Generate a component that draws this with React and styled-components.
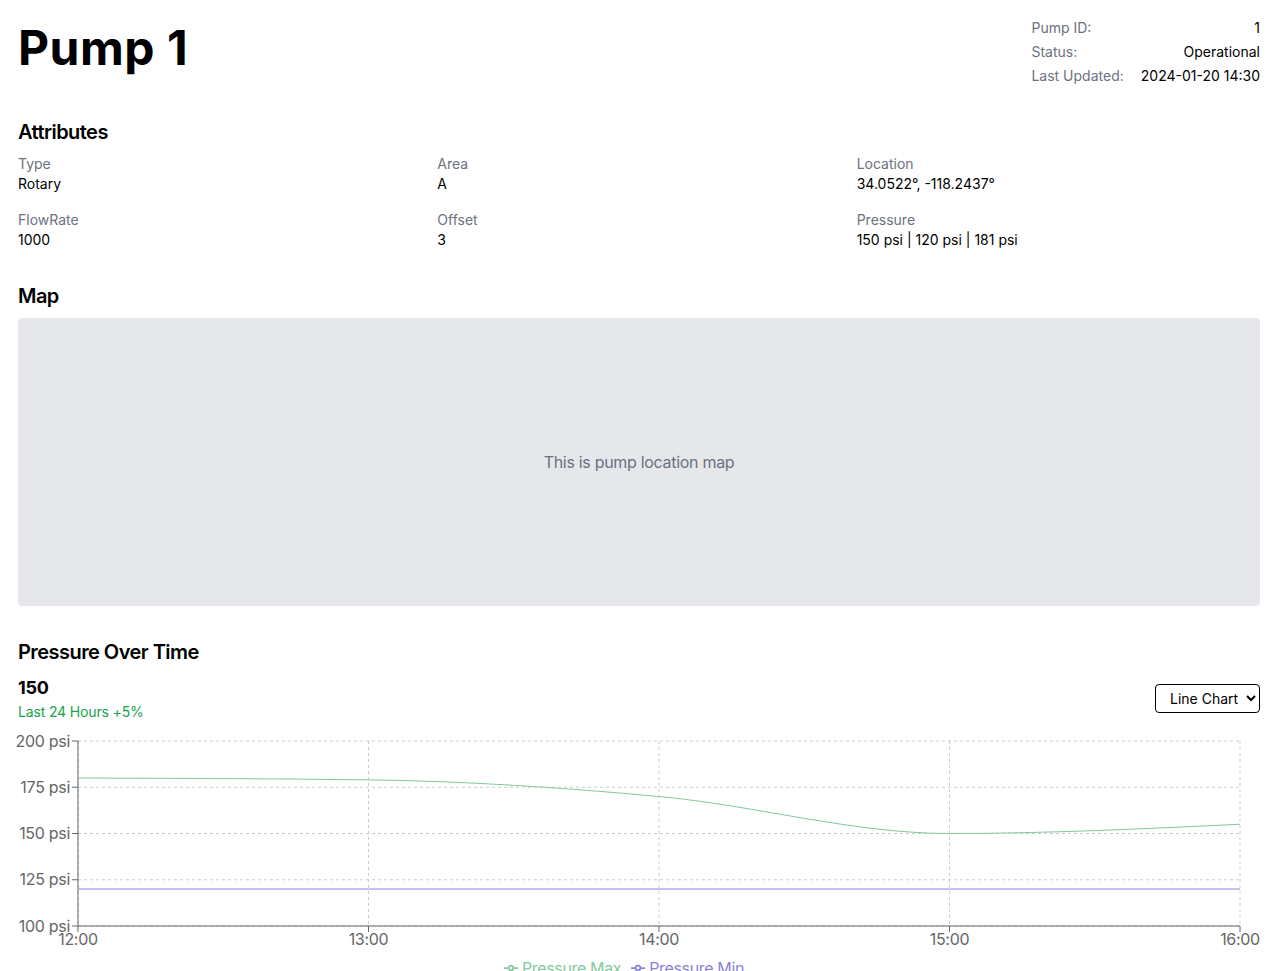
import React from 'react'
import styled, { createGlobalStyle } from "styled-components";

const GlobalStyle = createGlobalStyle`
  html, body {
    margin: 0;
    padding: 0;
    background: #fff;
  }
  body {
    font-family: Inter, "Noto Sans", "Liberation Sans", sans-serif;
    color: #000;
  }
  * { box-sizing: border-box; }
`;

const Page = styled.main`
  padding: 16px 21px 0 18px;
`;

const Header = styled.header`
  display: flex;
  justify-content: space-between;
  align-items: flex-start;
`;

const Title = styled.h1`
  margin: 0;
  font-size: 48px;
  line-height: 64px;
  font-weight: 700;
  letter-spacing: 0.5px;
`;

const InfoGrid = styled.dl`
  margin: 0;
  display: grid;
  grid-template-columns: auto auto;
  column-gap: 17px;
  font-size: 14px;
  line-height: 24px;

  dt {
    color: #6b7280;
  }
  dd {
    margin: 0;
    text-align: right;
  }
`;

const Section = styled.section`
  margin-top: ${({ $first }) => ($first ? '30px' : '32px')};
`;

const SectionTitle = styled.h2`
  margin: 0 0 8px 0;
  font-size: 20px;
  line-height: 28px;
  font-weight: 600;
  letter-spacing: -0.55px;
`;

const AttrGrid = styled.div`
  display: grid;
  grid-template-columns: repeat(3, 1fr);
  gap: 16px;
`;

const Attr = styled.div`
  font-size: 14px;
  line-height: 20px;
`;

const AttrLabel = styled.div`
  color: #6b7280;
`;

const MapBox = styled.div`
  height: 288px;
  background: #e5e7eb;
  border-radius: 4px;
  display: flex;
  align-items: center;
  justify-content: center;
  color: #6b7280;
  font-size: 16px;
  letter-spacing: -0.3px;
`;

const StatRow = styled.div`
  display: flex;
  justify-content: space-between;
  align-items: center;
`;

const StatValue = styled.div`
  font-size: 18px;
  line-height: 28px;
  font-weight: 700;
  letter-spacing: -0.2px;
`;

const StatDelta = styled.div`
  font-size: 14px;
  line-height: 20px;
  color: #16a34a;
  letter-spacing: -0.15px;
`;

const Select = styled.select`
  font-family: inherit;
  font-size: 14px;
  height: 29px;
  padding: 0 4px 0 10px;
  border: 1px solid #000;
  border-radius: 4px;
  background: #fff;
  color: #000;
`;

const ChartWrap = styled.div`
  margin-top: 14px;
  height: 250px;

  svg text {
    letter-spacing: -0.3px;
  }
`;

const Legend = styled.ul`
  list-style: none;
  margin: 0;
  padding: 0 20px 0 0;
  display: flex;
  justify-content: center;
  font-size: 16px;
  line-height: 24px;
  letter-spacing: -0.35px;
`;

const LegendItem = styled.li`
  display: flex;
  align-items: center;
  margin-right: 10px;
  color: ${({ $color }) => $color};

  svg {
    margin-right: 4px;
  }
`;

const attributes = [
  { label: 'Type', value: 'Rotary' },
  { label: 'Area', value: 'A' },
  { label: 'Location', value: '34.0522°, -118.2437°' },
  { label: 'FlowRate', value: '1000' },
  { label: 'Offset', value: '3' },
  { label: 'Pressure', value: '150 psi | 120 psi | 181 psi' },
];

const data = [
  { time: '12:00', max: 180, min: 120 },
  { time: '13:00', max: 179, min: 120 },
  { time: '14:00', max: 170, min: 120 },
  { time: '15:00', max: 150, min: 120 },
  { time: '16:00', max: 155, min: 120 },
];

// chart geometry
const W = 1242;
const LEFT = 60;
const RIGHT = 1222;
const TOP = 5;
const BOTTOM = 190;
const yTicks = [100, 125, 150, 175, 200];
const sx = (i) => LEFT + (i * (RIGHT - LEFT)) / (data.length - 1);
const sy = (v) => BOTTOM - ((v - 100) * (BOTTOM - TOP)) / 100;

const sign = (x) => (x < 0 ? -1 : 1);

// monotone X curve, same as d3's curveMonotoneX
function monotonePath(pts) {
  const n = pts.length;
  const t = new Array(n).fill(0);
  for (let i = 1; i < n - 1; i++) {
    const [x0, y0] = pts[i - 1];
    const [x1, y1] = pts[i];
    const [x2, y2] = pts[i + 1];
    const h0 = x1 - x0, h1 = x2 - x1;
    const s0 = (y1 - y0) / h0, s1 = (y2 - y1) / h1;
    const p = (s0 * h1 + s1 * h0) / (h0 + h1);
    t[i] = (sign(s0) + sign(s1)) * Math.min(Math.abs(s0), Math.abs(s1), 0.5 * Math.abs(p)) || 0;
  }
  const sFirst = (pts[1][1] - pts[0][1]) / (pts[1][0] - pts[0][0]);
  t[0] = (3 * sFirst - t[1]) / 2;
  const sLast = (pts[n - 1][1] - pts[n - 2][1]) / (pts[n - 1][0] - pts[n - 2][0]);
  t[n - 1] = (3 * sLast - t[n - 2]) / 2;

  let d = `M${pts[0][0]},${pts[0][1]}`;
  for (let i = 0; i < n - 1; i++) {
    const [x0, y0] = pts[i];
    const [x1, y1] = pts[i + 1];
    const dx = (x1 - x0) / 3;
    d += `C${x0 + dx},${y0 + dx * t[i]},${x1 - dx},${y1 - dx * t[i + 1]},${x1},${y1}`;
  }
  return d;
}

const LegendIcon = ({ color }) => (
  <svg width="14" height="14" viewBox="0 0 32 32">
    <path
      strokeWidth="4"
      fill="none"
      stroke={color}
      d="M0,16h10.667A5.333,5.333,0,1,1,21.333,16H32M21.333,16A5.333,5.333,0,1,1,10.667,16"
    />
  </svg>
);

const PressureChart = () => {
  const maxPath = monotonePath(data.map((d, i) => [sx(i), sy(d.max)]));
  const minPath = monotonePath(data.map((d, i) => [sx(i), sy(d.min)]));

  return (
    <ChartWrap>
      <svg width={W} height={220} style={{ display: 'block', overflow: 'visible' }}>
        <g stroke="#ccc" strokeDasharray="3 3" fill="none">
          {yTicks.map((v) => (
            <line key={v} x1={LEFT} x2={RIGHT} y1={sy(v)} y2={sy(v)} />
          ))}
          {data.map((d, i) => (
            <line key={d.time} x1={sx(i)} x2={sx(i)} y1={TOP} y2={BOTTOM} />
          ))}
        </g>

        <g stroke="#666" fill="none">
          <line x1={LEFT} x2={LEFT} y1={TOP} y2={BOTTOM} />
          <line x1={LEFT} x2={RIGHT} y1={BOTTOM} y2={BOTTOM} />
          {yTicks.map((v) => (
            <line key={v} x1={LEFT - 6} x2={LEFT} y1={sy(v)} y2={sy(v)} />
          ))}
          {data.map((d, i) => (
            <line key={d.time} x1={sx(i)} x2={sx(i)} y1={BOTTOM} y2={BOTTOM + 6} />
          ))}
        </g>

        <g fill="#666" fontSize="16">
          {yTicks.map((v) => (
            <text key={v} x={LEFT - 8} y={sy(v)} dy="0.355em" textAnchor="end">
              {v} psi
            </text>
          ))}
          {data.map((d, i) => (
            <text key={d.time} x={sx(i)} y={BOTTOM + 8} dy="0.71em" textAnchor="middle">
              {d.time}
            </text>
          ))}
        </g>

        <path d={maxPath} stroke="#82ca9d" strokeWidth="1" fill="none" />
        <path d={minPath} stroke="#8884d8" strokeWidth="1" fill="none" />
      </svg>
      <Legend>
        <LegendItem $color="#82ca9d">
          <LegendIcon color="#82ca9d" />
          Pressure Max
        </LegendItem>
        <LegendItem $color="#8884d8">
          <LegendIcon color="#8884d8" />
          Pressure Min
        </LegendItem>
      </Legend>
    </ChartWrap>
  );
};

const App = () => {
  return (
    <>
      <GlobalStyle />
      <Page>
        <Header>
          <Title>Pump 1</Title>
          <InfoGrid>
            <dt>Pump ID:</dt>
            <dd>1</dd>
            <dt>Status:</dt>
            <dd>Operational</dd>
            <dt>Last Updated:</dt>
            <dd>2024-01-20 14:30</dd>
          </InfoGrid>
        </Header>

        <Section $first>
          <SectionTitle>Attributes</SectionTitle>
          <AttrGrid>
            {attributes.map((a) => (
              <Attr key={a.label}>
                <AttrLabel>{a.label}</AttrLabel>
                <div>{a.value}</div>
              </Attr>
            ))}
          </AttrGrid>
        </Section>

        <Section>
          <SectionTitle>Map</SectionTitle>
          <MapBox>This is pump location map</MapBox>
        </Section>

        <Section>
          <SectionTitle>Pressure Over Time</SectionTitle>
          <StatRow>
            <div>
              <StatValue>150</StatValue>
              <StatDelta>Last 24 Hours +5%</StatDelta>
            </div>
            <Select defaultValue="line">
              <option value="line">Line Chart</option>
              <option value="bar">Bar Chart</option>
            </Select>
          </StatRow>
          <PressureChart />
        </Section>
      </Page>
    </>
  );
};

export default App
